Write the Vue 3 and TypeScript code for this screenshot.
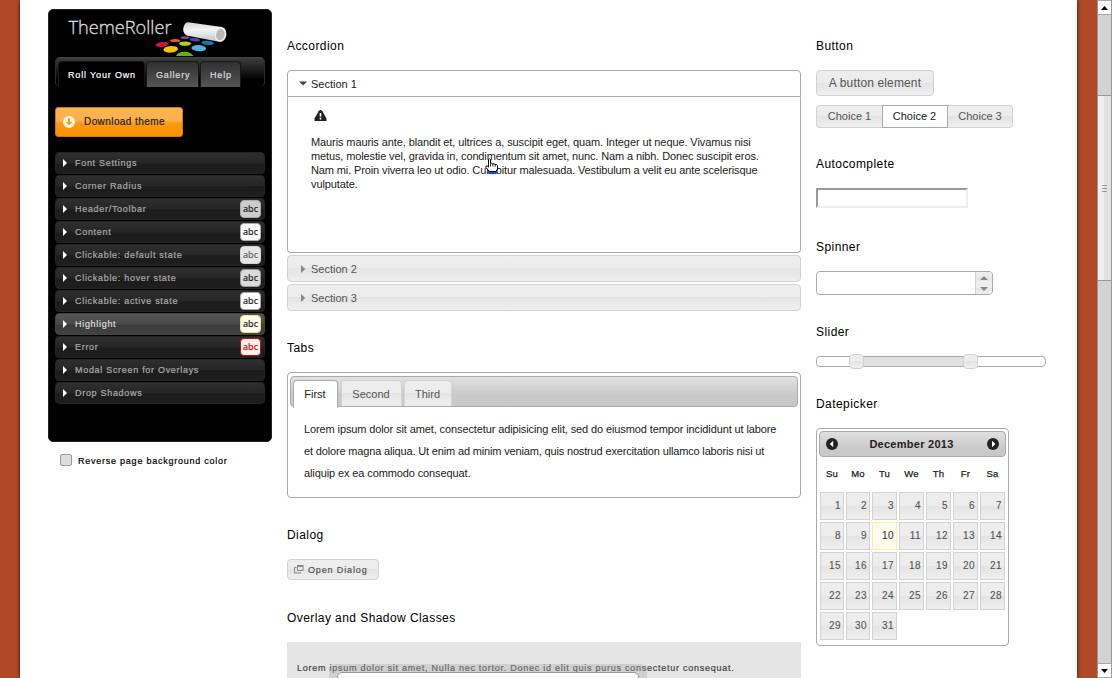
<script setup lang="ts">
interface Row {
  label: string
  badge?: string
  active?: boolean
}

const rows: Row[] = [
  { label: 'Font Settings' },
  { label: 'Corner Radius' },
  { label: 'Header/Toolbar', badge: 'header' },
  { label: 'Content', badge: 'content' },
  { label: 'Clickable: default state', badge: 'default' },
  { label: 'Clickable: hover state', badge: 'hover' },
  { label: 'Clickable: active state', badge: 'content' },
  { label: 'Highlight', badge: 'highlight', active: true },
  { label: 'Error', badge: 'error' },
  { label: 'Modal Screen for Overlays' },
  { label: 'Drop Shadows' },
]
const weekdays: string[] = ['Su', 'Mo', 'Tu', 'We', 'Th', 'Fr', 'Sa']
const today = 10
</script>

<template>
  <div class="page">
    <main class="sheet">
      <aside class="side">
        <div class="roller">
          <svg class="logo" width="210" height="48" viewBox="0 0 210 48">
            <defs>
              <linearGradient id="tube" x1="0" y1="0" x2="0.15" y2="1">
                <stop offset="0" stop-color="#d2d2d2" />
                <stop offset="0.45" stop-color="#f4f4f4" />
                <stop offset="1" stop-color="#c9c9c9" />
              </linearGradient>
              <linearGradient id="word" x1="0" y1="0" x2="0" y2="1">
                <stop offset="0" stop-color="#ffffff" />
                <stop offset="1" stop-color="#bdbdbd" />
              </linearGradient>
            </defs>
            <text x="13.5" y="23.500" class="word" fill="url(#word)" stroke="url(#word)" stroke-width="0.3" textLength="103" lengthAdjust="spacingAndGlyphs">ThemeRoller</text>
            <path d="M133 12.2 L167 17 Q172 19 171.300 26 Q169.500 32.500 164 31.700 L131.500 25.500 Q127.500 23 128.300 18 Q129.500 12.500 133 12.200Z" fill="url(#tube)" />
            <ellipse cx="165.300" cy="24.500" rx="5.600" ry="7.200" transform="rotate(12 165.300 24.500)" fill="#eee" />
            <ellipse cx="165.300" cy="24.700" rx="4.200" ry="5.700" transform="rotate(12 165.300 24.700)" fill="#b9b9b9" />
            <g>
              <ellipse cx="107" cy="34.500" rx="6.300" ry="2.400" fill="#d0152c" transform="rotate(-6 107 34.500)" />
              <ellipse cx="120.200" cy="30.500" rx="5" ry="1.600" fill="#f05a22" />
              <ellipse cx="130" cy="27.700" rx="4.400" ry="1.400" fill="#7a43a5" />
              <ellipse cx="139.800" cy="29.700" rx="5.200" ry="1.700" fill="#4a43b5" transform="rotate(5 139.800 29.700)" />
              <ellipse cx="130" cy="33.600" rx="6" ry="2.200" fill="#b0d41a" />
              <ellipse cx="152.700" cy="32.900" rx="6.200" ry="2.100" fill="#1a74bd" transform="rotate(5 152.700 32.900)" />
              <ellipse cx="115.700" cy="39.300" rx="7.300" ry="3.300" fill="#f7c407" transform="rotate(-4 115.700 39.300)" />
              <ellipse cx="143.700" cy="38.200" rx="7.300" ry="3.100" fill="#52b2de" transform="rotate(4 143.700 38.200)" />
              <path d="M121 46 Q122.500 42 129.500 41.800 Q136.500 42 138.300 46Z" fill="#6cad0e" />
            </g>
          </svg>
          <nav class="rtabs">
            <span class="rtab on">Roll Your Own</span>
            <span class="rtab gal">Gallery</span>
            <span class="rtab help">Help</span>
          </nav>
          <button class="download">
            <svg width="12" height="12" viewBox="0 0 12 12">
              <circle cx="6" cy="6" r="6" fill="#fff3dd" />
              <path d="M5 2.500h2v3.200h2.300L6 9.300 2.700 5.700H5z" fill="#fb9a12" />
            </svg>
            <span>Download theme</span>
          </button>
          <ul class="rows">
            <li v-for="r in rows" :key="r.label" :class="{ active: r.active }">
              <i class="arrow"></i>
              <span class="label">{{ r.label }}</span>
              <span v-if="r.badge" class="badge" :class="r.badge">abc</span>
            </li>
          </ul>
        </div>
        <label class="reverse"><i class="check"></i><span>Reverse page background color</span></label>
      </aside>

      <div class="middle">
        <h2>Accordion</h2>
        <div class="acc">
          <div class="acc-head open">
            <svg width="8" height="5" viewBox="0 0 8 5"><path d="M0 .5h8L4 4.500z" fill="#454545" /></svg>
            <span>Section 1</span>
          </div>
          <div class="acc-body">
            <svg class="alert" width="13" height="12" viewBox="0 0 13 12">
              <path d="M4.600 1.200Q6.500-1 8.400 1.200L12.500 8.500V11H.500V8.500z" fill="#222" />
              <path d="M5.700 3h1.600v3.800H5.700zM5.700 7.800h1.600v1.700H5.700z" fill="#fff" />
            </svg>
            <p>
              <span>Mauris mauris ante, blandit et, ultrices a, suscipit eget, quam. Integer ut neque. Vivamus nisi</span>
              <span>metus, molestie vel, gravida in, condimentum sit amet, nunc. Nam a nibh. Donec suscipit eros.</span>
              <span>Nam mi. Proin viverra leo ut odio. Curabitur malesuada. Vestibulum a velit eu ante scelerisque</span>
              <span>vulputate.</span>
            </p>
            <svg class="hand" width="14" height="17" viewBox="0 0 14 17">
              <ellipse cx="7" cy="14" rx="5.200" ry="2.200" fill="#1450b8" />
              <path d="M3.500 1.500Q4.500 0 5.500 1.500V5.500Q7 4.800 7.700 5.900Q9.300 5.300 10 6.500Q12 6 12.500 7.700V11L11 13.500H4.500L.8 9.300Q.5 7.600 2.200 7.900L3.500 9z" fill="#fff" stroke="#000" stroke-width="1" />
              <path d="M5.500 5.500v3M7.900 6v2.500M10.200 6.800v2" stroke="#000" stroke-width=".8" />
            </svg>
          </div>
          <div v-for="n in [2, 3]" :key="n" class="acc-head">
            <svg width="8" height="8" viewBox="0 0 8 8"><path d="M2 0v8L6.300 4z" fill="#888" /></svg>
            <span>Section {{ n }}</span>
          </div>
        </div>

        <h2 class="h-tabs">Tabs</h2>
        <div class="tabs">
          <div class="tabnav">
            <span class="tab t1">First</span>
            <span class="tab t2">Second</span>
            <span class="tab t3">Third</span>
          </div>
          <p>
            <span>Lorem ipsum dolor sit amet, consectetur adipisicing elit, sed do eiusmod tempor incididunt ut labore</span>
            <span>et dolore magna aliqua. Ut enim ad minim veniam, quis nostrud exercitation ullamco laboris nisi ut</span>
            <span>aliquip ex ea commodo consequat.</span>
          </p>
        </div>

        <h2 class="h-dialog">Dialog</h2>
        <button class="dialog">
          <svg width="10" height="9" viewBox="0 0 10 9">
            <path d="M3 0h6.500v6H3zM4 2v3h4.500V2z" fill="#888" fill-rule="evenodd" />
            <path d="M2.500 2.500H.500v5.500h6V7" stroke="#888" fill="none" />
          </svg>
          <span>Open Dialog</span>
        </button>

        <h2 class="h-overlay">Overlay and Shadow Classes</h2>
        <div class="overlay">
          <span class="lorem">Lorem ipsum dolor sit amet, Nulla nec tortor. Donec id elit quis purus consectetur consequat.</span>
          <div class="shadow"></div>
          <div class="panel"></div>
        </div>
      </div>

      <div class="right">
        <h2>Button</h2>
        <button class="btn">A button element</button>
        <div class="choices">
          <span>Choice 1</span><span class="sel">Choice 2</span><span>Choice 3</span>
        </div>

        <h2 class="h-auto">Autocomplete</h2>
        <div class="auto"></div>

        <h2 class="h-spin">Spinner</h2>
        <div class="spin">
          <div class="updown">
            <span><svg width="8" height="4" viewBox="0 0 8 4"><path d="M0 4h8L4 0z" fill="#888" /></svg></span>
            <span><svg width="8" height="4" viewBox="0 0 8 4"><path d="M0 0h8L4 4z" fill="#888" /></svg></span>
          </div>
        </div>

        <h2 class="h-slide">Slider</h2>
        <div class="slider">
          <div class="range"></div>
          <i class="handle a"></i>
          <i class="handle b"></i>
        </div>

        <h2 class="h-date">Datepicker</h2>
        <div class="date">
          <div class="date-head">
            <svg width="12" height="12" viewBox="0 0 12 12"><circle cx="6" cy="6" r="6" fill="#222" /><path d="M7.200 2.800v6.400L3.800 6z" fill="#fff" /></svg>
            <b>December 2013</b>
            <svg width="12" height="12" viewBox="0 0 12 12"><circle cx="6" cy="6" r="6" fill="#222" /><path d="M5 2.800v6.400L8.400 6z" fill="#fff" /></svg>
          </div>
          <div class="grid names"><span v-for="w in weekdays" :key="w">{{ w }}</span></div>
          <div class="grid days">
            <span v-for="d in 31" :key="d" :class="{ today: d === today }">{{ d }}</span>
          </div>
        </div>
      </div>
    </main>
    <div class="scroll">
      <span class="sbtn"><svg width="7" height="4" viewBox="0 0 7 4"><path d="M0 4h7L3.500 0z" fill="#000" /></svg></span>
      <div class="thumb"><i></i><i></i><i></i></div>
      <span class="sbtn"><svg width="7" height="4" viewBox="0 0 7 4"><path d="M0 0h7L3.500 4z" fill="#000" /></svg></span>
    </div>
  </div>
</template>

<style>
html,
body {
  overflow: hidden;
}
</style>

<style scoped>
* {
  box-sizing: border-box;
}
.page {
  width: 1112px;
  height: 678px;
  overflow: hidden;
  display: flex;
  background: #b24926;
  font: 11px/14px 'Liberation Sans', Arial, sans-serif;
  color: #222;
  padding-left: 20px;
  white-space: nowrap;
}
button {
  font: inherit;
  padding: 0;
  margin: 0;
}
.sheet {
  width: 1057px;
  height: 678px;
  background: #fff;
  box-shadow: 0 0 4px rgba(0, 0, 0, 0.75);
  display: flex;
  flex: none;
}
.side {
  width: 224px;
  margin: 9px 0 0 28px;
  -webkit-text-stroke-width: 0.2px;
}
.roller {
  height: 433px;
  background: #000;
  border: 1px solid #222;
  border-radius: 5px;
  padding: 0 6px;
}
.logo {
  display: block;
  -webkit-text-stroke-width: 0.3px;
}
.word {
  font: 19px 'Open Sans', 'Noto Sans', sans-serif;
  font-weight: 300;
}
.rtabs {
  height: 30px;
  margin-top: -1px;
  border: 1px solid #2b2b2b;
  border-top-color: #444;
  border-bottom: 0;
  border-radius: 5px;
  background: linear-gradient(#3d3d3d, #000 75%);
  display: flex;
  align-items: flex-end;
  padding-left: 2px;
  font-size: 9px;
  color: #ddd;
}
.rtab {
  height: 26px;
  line-height: 26px;
  border-radius: 4px 4px 0 0;
  border: 1px solid #161616;
  border-bottom: 0;
  background: linear-gradient(#303030, #555);
  letter-spacing: 0.84px;
  padding-left: 9px;
}
.rtab.on {
  width: 87px;
  background: #000;
  color: #fff;
}
.gal {
  width: 53px;
  margin-left: 1px;
}
.help {
  width: 41px;
  margin-left: 1px;
}
.download {
  display: flex;
  align-items: center;
  width: 128px;
  height: 30px;
  margin: 20px 0 0;
  padding-left: 7px;
  border: 1px solid #d07b05;
  border-radius: 3px;
  background: linear-gradient(#fdb453, #fdb04a 45%, #fa9a10 55%, #fb9200);
  font-size: 10px;
  letter-spacing: 0.42px;
  color: #222;
}
.download span {
  margin-left: 9px;
}
.rows {
  list-style: none;
  margin: 15px 0 0;
  padding: 0;
}
.rows li {
  height: 22px;
  margin-bottom: 1px;
  border-radius: 4px;
  border: 1px solid #252525;
  background: linear-gradient(#2e2e2e, #262626 50%, #1c1c1c 55%, #1e1e1e);
  display: flex;
  align-items: center;
  padding: 0 3px 0 7px;
  color: #aaa;
  font-size: 9px;
  letter-spacing: 0.7px;
}
.rows li.active {
  background: linear-gradient(#555, #4a4a4a 50%, #3c3c3c 55%, #424242);
  border-color: #444;
  color: #ddd;
}
.arrow {
  border: solid transparent;
  border-width: 4px 0 4px 4px;
  border-left-color: #fff;
  margin-right: 8px;
}
.badge {
  margin-left: auto;
  width: 21px;
  height: 18px;
  border: 1px solid #aaa;
  border-radius: 4px;
  font: 9px/15px 'Noto Sans', sans-serif;
  letter-spacing: 0;
  text-align: center;
  color: #222;
  background: #fff;
}
.badge.header {
  background: #ccc;
}
.badge.default {
  background: #e6e6e6;
  border-color: #d3d3d3;
  color: #666;
}
.badge.hover {
  background: #dadada;
  border-color: #999;
}
.badge.highlight {
  background: #fdfbea;
  border-color: #fcdf70;
}
.badge.error {
  background: #fef1ec;
  border: 1px solid #cd0a0a;
  color: #cd0a0a;
}
.reverse {
  display: flex;
  align-items: center;
  margin: 12px 0 0 12px;
  font-size: 9px;
  letter-spacing: 0.76px;
  color: #000;
}
.check {
  width: 12px;
  height: 12px;
  border: 1px solid #999;
  border-radius: 2px;
  background: #ddd;
  margin: -3px 6px 0 0;
}
h2 {
  margin: 37px 0 15px;
  height: 18px;
  font: 12px/18px 'Liberation Sans', sans-serif;
  letter-spacing: 0.43px;
  color: #000;
}
.middle {
  width: 514px;
  margin-left: 15px;
}
.acc-head {
  height: 27px;
  margin-top: 2px;
  border: 1px solid #d3d3d3;
  border-radius: 4px;
  background: linear-gradient(#eee, #ececec 49%, #e4e4e4 50%, #efefef);
  color: #555;
  display: flex;
  align-items: center;
  padding-left: 11px;
}
.acc-head svg {
  margin-right: 4px;
}
.acc-head.open {
  margin: 0;
  background: #fff;
  border-color: #aaa;
  border-radius: 4px 4px 0 0;
  color: #222;
}
.acc-body {
  position: relative;
  height: 156px;
  border: 1px solid #aaa;
  border-top: 0;
  border-radius: 0 0 4px 4px;
  padding: 13px 0 0 23px;
}
.alert {
  display: block;
  margin-left: 3px;
}
.acc-body p {
  margin: 13px 0 0;
  letter-spacing: -0.1px;
}
p span {
  display: block;
}
.acc-body p span:nth-child(2),
.acc-body p span:nth-child(3) {
  letter-spacing: -0.123px;
}
.hand {
  position: absolute;
  left: 197px;
  top: 61px;
}
.h-tabs {
  margin-top: 28px;
}
.tabs {
  height: 126px;
  border: 1px solid #aaa;
  border-radius: 4px;
  padding: 3px 2px;
}
.tabnav {
  height: 31px;
  border: 1px solid #aaa;
  border-radius: 4px;
  background: linear-gradient(#e2e2e2, #cacaca 60%, #c8c8c8);
  display: flex;
  padding: 3px 2px 0;
}
.tab {
  height: 26px;
  line-height: 26px;
  border: 1px solid #d3d3d3;
  border-bottom: 0;
  border-radius: 4px 4px 0 0;
  background: linear-gradient(#eee, #ececec 49%, #e4e4e4 50%, #efefef);
  text-align: center;
  color: #555;
  margin-right: 2px;
  padding-right: 1px;
}
.t1 {
  width: 45px;
  height: 28px;
  margin-right: 3px;
  border-color: #aaa;
  background: #fff;
  color: #222;
}
.t2 {
  width: 61px;
}
.t3 {
  width: 48px;
}
.tabs p {
  margin: 11px 0 0 14px;
  line-height: 22px;
  letter-spacing: -0.113px;
}
.tabs p span:nth-child(2) {
  letter-spacing: -0.158px;
}
.h-dialog {
  margin-top: 28px;
}
.dialog {
  display: flex;
  align-items: center;
  width: 92px;
  height: 21px;
  border: 1px solid #d3d3d3;
  border-radius: 4px;
  background: linear-gradient(#eee, #ececec 49%, #e4e4e4 50%, #efefef);
  color: #555;
  font-size: 9px;
  letter-spacing: 0.87px;
  padding-left: 6px;
  -webkit-text-stroke-width: 0.2px;
}
.dialog span {
  margin-left: 4px;
}
.h-overlay {
  margin-top: 29px;
}
.overlay {
  position: relative;
  height: 36px;
  background: #e5e5e5;
  padding: 19px 0 0 10px;
  overflow: hidden;
  font-size: 9px;
  letter-spacing: 0.745px;
  color: #444;
  -webkit-text-stroke-width: 0.2px;
}
.shadow {
  position: absolute;
  left: 42px;
  top: 22px;
  width: 318px;
  height: 40px;
  border-radius: 6px;
  background: rgba(170, 170, 170, 0.35);
}
.panel {
  position: absolute;
  left: 50px;
  top: 30px;
  width: 302px;
  height: 40px;
  border: 1px solid #999;
  border-radius: 5px;
  background: #fff;
}
.right {
  width: 230px;
  margin-left: 15px;
}
.btn {
  display: block;
  width: 118px;
  height: 26px;
  border: 1px solid #d3d3d3;
  border-radius: 4px;
  background: linear-gradient(#eee, #ececec 49%, #e4e4e4 50%, #efefef);
  color: #555;
  font-size: 12px;
  letter-spacing: 0.14px;
}
.choices {
  display: grid;
  grid-template-columns: 66px 66px 65px;
  margin-top: 9px;
  width: 197px;
  height: 23px;
  line-height: 21px;
  text-align: center;
}
.choices span {
  border: 1px solid #d3d3d3;
  background: linear-gradient(#eee, #ececec 49%, #e4e4e4 50%, #efefef);
  color: #555;
}
.choices span:first-child {
  border-radius: 4px 0 0 4px;
  border-right: 0;
}
.choices span:last-child {
  border-radius: 0 4px 4px 0;
  border-left: 0;
}
.choices .sel {
  background: #fff;
  border-color: #aaa;
  color: #222;
  padding-right: 1px;
}
.h-auto {
  margin-top: 27px;
}
.auto {
  width: 152px;
  height: 20px;
  border: 2px solid #eee;
  border-top-color: #999;
  border-left-color: #999;
}
.h-spin {
  margin-top: 30px;
}
.spin {
  width: 177px;
  height: 24px;
  border: 1px solid #aaa;
  border-radius: 4px;
  display: flex;
  justify-content: flex-end;
  overflow: hidden;
}
.updown {
  width: 17px;
  border-left: 1px solid #d3d3d3;
}
.updown span {
  height: 11px;
  display: flex;
  align-items: center;
  padding-left: 4px;
  background: linear-gradient(#eee, #ececec 49%, #e4e4e4 50%, #efefef);
}
.h-slide {
  margin-top: 28px;
}
.slider {
  position: relative;
  height: 11px;
  border: 1px solid #aaa;
  border-radius: 4px;
}
.range {
  margin-left: 39px;
  width: 115px;
  height: 9px;
  background: #e1e1e1;
}
.handle {
  position: absolute;
  top: -3px;
  width: 15px;
  height: 15px;
  border: 1px solid #d3d3d3;
  border-radius: 4px;
  background: linear-gradient(#eee, #ececec 49%, #e4e4e4 50%, #efefef);
}
.handle.a {
  left: 32px;
}
.handle.b {
  left: 146px;
}
.h-date {
  margin-top: 28px;
}
.date {
  width: 193px;
  height: 218px;
  border: 1px solid #aaa;
  border-radius: 4px;
  padding: 2px;
}
.date-head {
  height: 26px;
  border: 1px solid #aaa;
  border-radius: 4px;
  background: linear-gradient(#e0e0e0, #cacaca 65%, #c8c8c8);
  display: flex;
  align-items: center;
  justify-content: space-between;
  padding: 0 6px;
  letter-spacing: 0.27px;
}
.date-head b {
  margin-right: 2px;
}
.grid {
  display: grid;
  grid-template-columns: 24px 24px repeat(5, 25px);
  gap: 2px;
  padding-left: 1px;
}
.names {
  height: 35px;
  line-height: 33px;
  text-align: center;
  font-size: 9.5px;
  letter-spacing: 0.15px;
  -webkit-text-stroke-width: 0.25px;
}
.days {
  grid-auto-rows: 28px;
  line-height: 26px;
  text-align: right;
  font-size: 10px;
  letter-spacing: 0.4px;
  -webkit-text-stroke-width: 0.1px;
}
.days span {
  border: 1px solid #d3d3d3;
  background: linear-gradient(#eee, #ececec 49%, #e4e4e4 50%, #efefef);
  color: #555;
  padding-right: 2px;
}
.days .today {
  border-color: #fcefa1;
  background: #fdfbee;
  color: #363636;
}
.scroll {
  margin-left: 20px;
  width: 15px;
  background: #d3d3d3;
  border: solid #999;
  border-width: 0 1px;
  display: flex;
  flex-direction: column;
}
.sbtn {
  height: 15px;
  background: #fff;
  border: 1px solid #aaa;
  border-width: 1px 0;
  display: flex;
  align-items: center;
  justify-content: center;
}
.thumb {
  height: 186px;
  margin: 80px 0 382px;
  border: solid #999;
  border-width: 1px 0;
  background: linear-gradient(90deg, #f0f0f0 50%, #e2e2e2 50%);
  display: flex;
  flex-direction: column;
  align-items: center;
  justify-content: center;
  gap: 2px;
}
.thumb i {
  width: 5px;
  height: 1px;
  background: #999;
}
</style>
